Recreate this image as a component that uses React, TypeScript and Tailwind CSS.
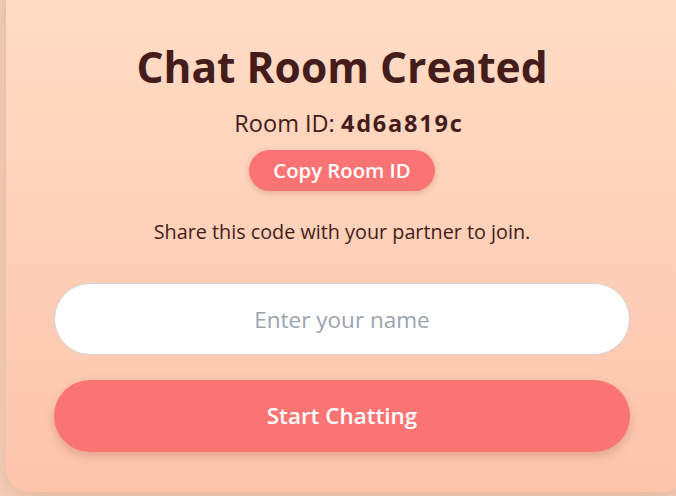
import React, { useState } from "react";

export default function App() {
  const [name, setName] = useState("");
  const roomId = "4d6a819c";

  return (
    <div
      className="h-[496px] w-[676px] overflow-hidden bg-[#f3cfb8]"
      style={{ fontFamily: '"Open Sans", "Noto Sans", sans-serif' }}
    >
      <div className="ml-[6px] -mt-[40px] h-[532px] w-[680px] rounded-[24px] bg-gradient-to-b from-[#ffdec6] to-[#fdc4ac] shadow-[0_4px_20px_rgba(180,100,70,0.25)]">
        <div className="flex flex-col items-center pl-[48px] pr-[56px] pt-[81px]">
          <h1 className="text-[42.5px] font-bold leading-[52px] text-[#441c1c]">Chat Room Created</h1>
          <p className="ml-[14px] mt-[15px] text-[23.5px] leading-[30px] text-[#441c1c]">
            Room ID: <span className="font-bold tracking-[1.8px]">{roomId}</span>
          </p>
          <button
            onClick={() => navigator.clipboard?.writeText(roomId)}
            className="mt-[12px] h-[41px] rounded-full bg-[#fb7474] px-[24px] text-[20.3px] font-semibold text-white shadow-[0_2px_6px_rgba(150,60,50,0.25)]"
          >
            Copy Room ID
          </button>
          <p className="mt-[27px] text-[19.8px] leading-[28px] text-[#441c1c]">
            Share this code with your partner to join.
          </p>
          <input
            value={name}
            onChange={(e) => setName(e.target.value)}
            placeholder="Enter your name"
            className="mt-[37px] h-[72px] w-full rounded-full border border-[#d4d4d8] bg-white text-center text-[22.5px] text-[#441c1c] outline-none placeholder:text-[#9ca3af]"
          />
          <button className="mt-[25px] h-[72px] w-full rounded-full bg-[#fb7474] text-[22.4px] font-semibold text-white shadow-[0_4px_10px_rgba(150,60,50,0.25)]">
            Start Chatting
          </button>
        </div>
      </div>
    </div>
  );
}
